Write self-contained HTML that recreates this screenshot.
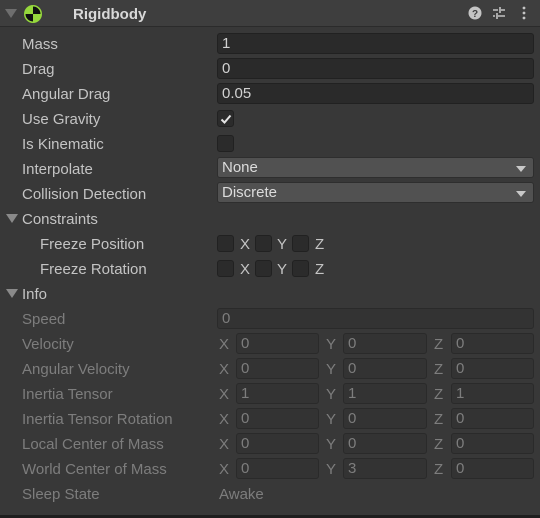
<!DOCTYPE html>
<html><head><style>
*{margin:0;padding:0;box-sizing:border-box}
body{width:540px;height:518px;background:#383838;font-family:"Liberation Sans",sans-serif;font-size:15px;color:#c4c4c4;position:relative;overflow:hidden}
.a{position:absolute;white-space:nowrap;line-height:18px;margin-top:1px}
svg.a{margin-top:0}
.hdr{position:absolute;left:0;top:0;width:540px;height:27px;background:#3e3e3e;border-bottom:1px solid #2b2b2b}
.f{position:absolute;height:21px;background:#2a2a2a;border:1px solid #212121;border-radius:3px;padding-left:4px;line-height:20px;color:#d2d2d2}
.fd{background:#333;border-color:#2a2a2a;color:#7d7d7d}
.dd{position:absolute;height:21px;background:#515151;border:1px solid #2e2e2e;border-radius:3px;padding-left:4px;line-height:20px;color:#dcdcdc;left:217px;width:317px}
.dd:after{content:"";position:absolute;right:7px;top:8px;border-left:5px solid transparent;border-right:5px solid transparent;border-top:6px solid #c8c8c8}
.cb{position:absolute;width:17px;height:17px;background:#2b2b2b;border:1px solid #212121;border-radius:3px}
.g{color:#7d7d7d}
.tri{position:absolute;width:0;height:0;border-left:6px solid transparent;border-right:6px solid transparent;border-top:9px solid #8a8a8a}
</style></head><body>
<div class="hdr"></div>
<div class="tri" style="left:5px;top:9px;border-top-color:#6e6e6e"></div>
<svg class="a" style="left:23px;top:4px" width="20" height="20" viewBox="0 0 20 20"><circle cx="10" cy="10" r="9" fill="#96d83c"/><path d="M10 10V2.5A7.5 7.5 0 0 1 17.5 10Z M10 10V17.5A7.5 7.5 0 0 1 2.5 10Z" fill="#111"/></svg>
<div class="a" style="left:73px;top:5px;font-weight:bold;color:#d8d8d8">Rigidbody</div>
<svg class="a" style="left:467px;top:6px" width="62" height="16" viewBox="0 0 62 16">
<circle cx="8" cy="7" r="6.5" fill="#c4c4c4"/><text x="8" y="11" font-size="10" font-weight="bold" text-anchor="middle" fill="#3e3e3e" font-family="Liberation Sans">?</text>
<path d="M26 4h5M34 4h4M26 10h2M31 10h7M33 1v6M30 7v6" stroke="#c4c4c4" stroke-width="1.6" fill="none"/>
<circle cx="57" cy="2" r="1.4" fill="#c4c4c4"/><circle cx="57" cy="7" r="1.4" fill="#c4c4c4"/><circle cx="57" cy="12" r="1.4" fill="#c4c4c4"/>
</svg>

<div class="a" style="left:22px;top:35px">Mass</div><div class="f" style="left:217px;top:33px;width:317px">1</div>
<div class="a" style="left:22px;top:60px">Drag</div><div class="f" style="left:217px;top:58px;width:317px">0</div>
<div class="a" style="left:22px;top:85px">Angular Drag</div><div class="f" style="left:217px;top:83px;width:317px">0.05</div>
<div class="a" style="left:22px;top:110px">Use Gravity</div><div class="cb" style="left:217px;top:110px"></div>
<svg class="a" style="left:219px;top:112px" width="14" height="14"><path d="M2.5 7.5l3 3 6-7" stroke="#e4e4e4" stroke-width="2" fill="none"/></svg>
<div class="a" style="left:22px;top:135px">Is Kinematic</div><div class="cb" style="left:217px;top:135px"></div>
<div class="a" style="left:22px;top:160px">Interpolate</div><div class="dd" style="top:157px">None</div>
<div class="a" style="left:22px;top:185px">Collision Detection</div><div class="dd" style="top:182px">Discrete</div>
<div class="tri" style="left:6px;top:214px"></div><div class="a" style="left:22px;top:210px">Constraints</div>
<div class="a" style="left:40px;top:235px">Freeze Position</div>
<div class="cb" style="left:217px;top:235px"></div><div class="a" style="left:240px;top:235px">X</div>
<div class="cb" style="left:255px;top:235px"></div><div class="a" style="left:277px;top:235px">Y</div>
<div class="cb" style="left:292px;top:235px"></div><div class="a" style="left:315px;top:235px">Z</div>
<div class="a" style="left:40px;top:260px">Freeze Rotation</div>
<div class="cb" style="left:217px;top:260px"></div><div class="a" style="left:240px;top:260px">X</div>
<div class="cb" style="left:255px;top:260px"></div><div class="a" style="left:277px;top:260px">Y</div>
<div class="cb" style="left:292px;top:260px"></div><div class="a" style="left:315px;top:260px">Z</div>
<div class="tri" style="left:6px;top:289px"></div><div class="a" style="left:22px;top:285px">Info</div>
<div class="a g" style="left:22px;top:310px">Speed</div><div class="f fd" style="left:217px;top:308px;width:317px">0</div>

<div class="a g" style="left:22px;top:335px">Velocity</div>
<div class="a g" style="left:22px;top:360px">Angular Velocity</div>
<div class="a g" style="left:22px;top:385px">Inertia Tensor</div>
<div class="a g" style="left:22px;top:410px">Inertia Tensor Rotation</div>
<div class="a g" style="left:22px;top:435px">Local Center of Mass</div>
<div class="a g" style="left:22px;top:460px">World Center of Mass</div>

<div class="a g" style="left:219px;top:335px">X</div><div class="f fd" style="left:236px;top:333px;width:83px">0</div><div class="a g" style="left:326px;top:335px">Y</div><div class="f fd" style="left:343px;top:333px;width:84px">0</div><div class="a g" style="left:434px;top:335px">Z</div><div class="f fd" style="left:451px;top:333px;width:83px">0</div>
<div class="a g" style="left:219px;top:360px">X</div><div class="f fd" style="left:236px;top:358px;width:83px">0</div><div class="a g" style="left:326px;top:360px">Y</div><div class="f fd" style="left:343px;top:358px;width:84px">0</div><div class="a g" style="left:434px;top:360px">Z</div><div class="f fd" style="left:451px;top:358px;width:83px">0</div>
<div class="a g" style="left:219px;top:385px">X</div><div class="f fd" style="left:236px;top:383px;width:83px">1</div><div class="a g" style="left:326px;top:385px">Y</div><div class="f fd" style="left:343px;top:383px;width:84px">1</div><div class="a g" style="left:434px;top:385px">Z</div><div class="f fd" style="left:451px;top:383px;width:83px">1</div>
<div class="a g" style="left:219px;top:410px">X</div><div class="f fd" style="left:236px;top:408px;width:83px">0</div><div class="a g" style="left:326px;top:410px">Y</div><div class="f fd" style="left:343px;top:408px;width:84px">0</div><div class="a g" style="left:434px;top:410px">Z</div><div class="f fd" style="left:451px;top:408px;width:83px">0</div>
<div class="a g" style="left:219px;top:435px">X</div><div class="f fd" style="left:236px;top:433px;width:83px">0</div><div class="a g" style="left:326px;top:435px">Y</div><div class="f fd" style="left:343px;top:433px;width:84px">0</div><div class="a g" style="left:434px;top:435px">Z</div><div class="f fd" style="left:451px;top:433px;width:83px">0</div>
<div class="a g" style="left:219px;top:460px">X</div><div class="f fd" style="left:236px;top:458px;width:83px">0</div><div class="a g" style="left:326px;top:460px">Y</div><div class="f fd" style="left:343px;top:458px;width:84px">3</div><div class="a g" style="left:434px;top:460px">Z</div><div class="f fd" style="left:451px;top:458px;width:83px">0</div>

<div class="a g" style="left:22px;top:485px">Sleep State</div><div class="a g" style="left:219px;top:485px">Awake</div>
<div style="position:absolute;left:0;top:515px;width:540px;height:3px;background:#1e1e1e"></div>
</body></html>
